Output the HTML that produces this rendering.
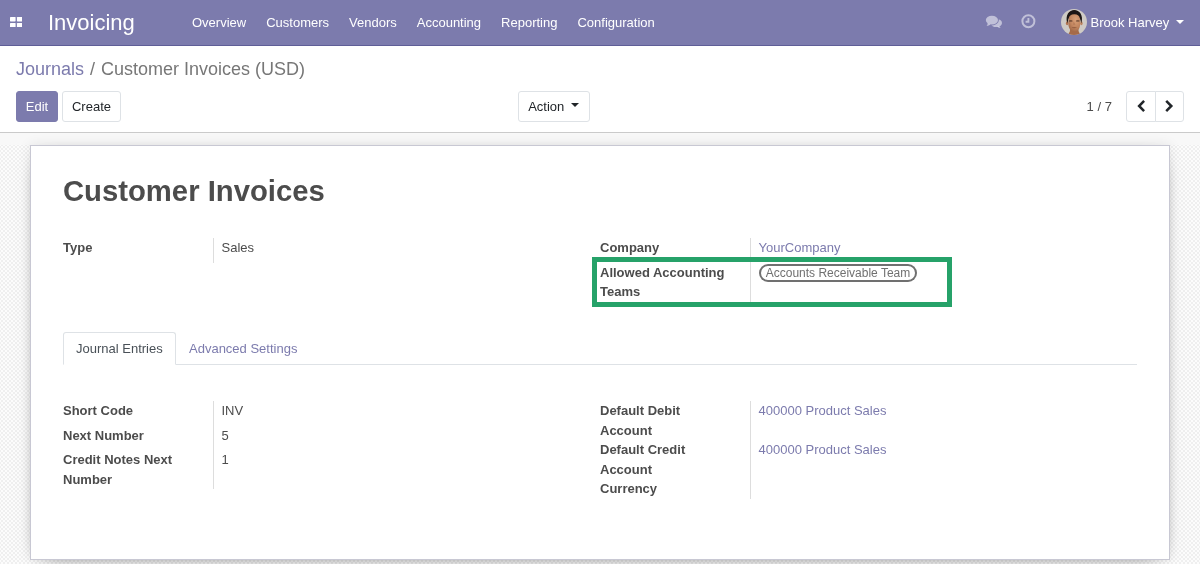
<!DOCTYPE html>
<html lang="en">
<head>
<meta charset="utf-8">
<title>Customer Invoices (USD) - Odoo</title>
<style>
*{box-sizing:border-box;}
html,body{margin:0;padding:0;}
body{width:1200px;height:564px;overflow:hidden;font-family:"Liberation Sans",sans-serif;font-size:13px;line-height:1.5;color:#4c4c4c;background:#f9f9f9;position:relative;}
a{color:#7c7bad;text-decoration:none;}

/* NAVBAR */
.navbar{position:absolute;left:0;top:0;width:1200px;height:46px;background:#7c7bad;border-bottom:1px solid #5f5e97;color:#fff;}
.navbar .apps{position:absolute;left:9.750px;top:16.650px;width:12.500px;height:10.400px;}
.navbar .brand{position:absolute;left:48px;top:0;height:46px;line-height:46px;font-size:22px;color:#fff;}
.navbar .menu{position:absolute;left:182px;top:0;height:46px;display:flex;}
.navbar .menu a{display:block;color:#fff;padding:0 10px;line-height:46px;font-size:13px;}
.navbar .user{position:absolute;left:1090.5px;top:0;line-height:46px;font-size:13px;color:#fff;}
.navbar .caret{position:absolute;left:1176px;top:20px;width:0;height:0;border-left:4px solid transparent;border-right:4px solid transparent;border-top:4px solid #fff;}

/* CONTROL PANEL */
.cp{position:absolute;left:0;top:46px;width:1200px;height:87px;background:#fff;border-bottom:1px solid #cacaca;}
.breadcrumb{position:absolute;left:16px;top:10px;font-size:18px;line-height:27px;color:#777;white-space:nowrap;}
.breadcrumb .sep{color:#777;padding:0 6px;}
.btn{position:absolute;top:45px;height:31px;border:1px solid #dee2e6;border-radius:3px;background:#fff;color:#212529;font-size:13px;line-height:29px;text-align:center;padding:0;}
.btn-primary{background:#7c7bad;border-color:#7c7bad;color:#fff;}
.pager{position:absolute;left:1086.600px;top:45px;line-height:31px;font-size:13px;color:#4c4c4c;}

/* CONTENT */
.content{position:absolute;left:0;top:133px;width:1200px;height:431px;background:conic-gradient(#efefef 25%,#fcfcfc 0 50%,#efefef 0 75%,#fcfcfc 0) 3px 3px/4px 4px;overflow:hidden;}
.content .topshadow{position:absolute;left:0;top:0;width:1200px;height:12px;background:#f8f8f8;}
.sheet{position:absolute;left:30px;top:12px;width:1140px;height:415px;background:#fff;border:1px solid #c8c8d3;box-shadow:0 0 12px rgba(0,0,0,.09),0 5px 20px -15px #000;}
h1{position:absolute;left:32px;top:28px;margin:0;font-size:29.25px;font-weight:bold;line-height:1.2;color:#4c4c4c;white-space:nowrap;}
.navbar,.cp,.content,.sheet{will-change:transform;}
.lbl{position:absolute;font-weight:bold;color:#4c4c4c;line-height:19.5px;white-space:nowrap;}
.val{position:absolute;color:#4c4c4c;line-height:19.5px;white-space:nowrap;}
.vline{position:absolute;width:1px;background:#ddd;}

.sysicon{position:absolute;}
.btn .caret2{position:absolute;left:52px;top:11px;width:0;height:0;border-left:4px solid transparent;border-right:4px solid transparent;border-top:4px solid #212529;}
.btn svg{position:absolute;left:0;top:0;}
.hl{position:absolute;left:561px;top:111px;width:360px;height:50px;border:5px solid #26a269;}
.tag{position:absolute;left:728px;top:118px;width:158px;height:18px;border-radius:9px;box-shadow:inset 0 0 0 2px #707070;color:#707070;font-size:12px;line-height:18px;text-align:center;white-space:nowrap;}
.tabs{position:absolute;left:32px;top:186px;width:1074px;height:33px;border-bottom:1px solid #dee2e6;}
.tab{position:absolute;top:0;height:33px;line-height:19.5px;padding:7px 13px 0 13px;white-space:nowrap;color:#7c7bad;}
.tab.active{left:0;width:113px;border:1px solid #dee2e6;border-bottom:1px solid #fff;border-radius:3px 3px 0 0;color:#495057;padding:6px 12px 0 12px;background:#fff;}
</style>
</head>
<body>

<div class="navbar">
  <svg class="apps" viewBox="0 0 12.5 10.4"><rect x="0" y="0" width="5.6" height="4.45" rx=".6" fill="#fff"/><rect x="6.9" y="0" width="5.6" height="4.45" rx=".6" fill="#fff"/><rect x="0" y="5.95" width="5.6" height="4.45" rx=".6" fill="#fff"/><rect x="6.9" y="5.95" width="5.6" height="4.45" rx=".6" fill="#fff"/></svg>
  <div class="brand">Invoicing</div>
  <div class="menu">
    <a>Overview</a><a>Customers</a><a>Vendors</a><a>Accounting</a><a>Reporting</a><a>Configuration</a>
  </div>
  <svg class="sysicon" style="left:985px;top:15px;" width="18" height="14" viewBox="0 0 18 14"><defs><mask id="cm"><rect width="18" height="14" fill="#fff"/><ellipse cx="6.9" cy="5.1" rx="7" ry="5.3" fill="#000"/><path d="M2.2 8.200L1 12l5-2.300z" fill="#000"/></mask></defs><g fill="#fff" fill-opacity=".52"><ellipse cx="6.9" cy="5.1" rx="6.1" ry="4.4"/><path d="M2.700 8.100C2.600 9.300 2.300 10.300 1.600 11.100 3.200 10.900 4.500 10.300 5.500 9.400z"/><g mask="url(#cm)"><ellipse cx="11.300" cy="8" rx="5.700" ry="4.100"/><path d="M14.300 11.300C14.600 12 15.100 12.600 15.800 13.100 14.400 13 13.200 12.500 12.200 11.800z"/></g></g></svg>
  <svg class="sysicon" style="left:1020px;top:13px;" width="17" height="17" viewBox="0 0 17 17"><g fill="none" stroke="#fff" stroke-opacity=".52"><circle cx="8.400" cy="8.250" r="6" stroke-width="2"/><path d="M8.400 5v3.700H5.600" stroke-width="1.900"/></g></svg>
  <svg class="sysicon" style="left:1061px;top:9px;" width="26" height="26" viewBox="0 0 26 26"><defs><clipPath id="avc"><circle cx="13" cy="13" r="13"/></clipPath><radialGradient id="avg" cx=".62" cy=".3" r=".8"><stop offset="0" stop-color="#d9a178"/><stop offset=".55" stop-color="#c28660"/><stop offset="1" stop-color="#9c6444"/></radialGradient><filter id="avb" x="-20%" y="-20%" width="140%" height="140%"><feGaussianBlur stdDeviation=".45"/></filter></defs><g clip-path="url(#avc)"><rect width="26" height="26" fill="#cfcbc5"/><g filter="url(#avb)"><path d="M6.500 27L8.800 22.500 9.500 18h7.500l.7 4.500L20 27z" fill="#a56b49"/><ellipse cx="6.100" cy="14.300" rx="1.200" ry="2" fill="#b07552"/><ellipse cx="20.400" cy="14.300" rx="1.200" ry="2" fill="#bd8560"/><path d="M6.300 14.200C3.800 6 8.300 1 13.300 1s9.500 5 7 13.200l-1.300-4.700H7.600z" fill="#1b1412"/><path d="M7.700 9.800C8 6.800 9.800 5.200 13.300 5.200s5.300 1.600 5.600 4.600c.5 3 .6 6.200-.3 8.600-.9 2.500-2.900 4.100-5.300 4.100s-4.400-1.600-5.300-4.100c-.9-2.400-.8-5.600-.3-8.600z" fill="url(#avg)"/><ellipse cx="9.700" cy="11.900" rx="1.900" ry=".85" fill="#5e3d2d" fill-opacity=".75"/><ellipse cx="16.800" cy="11.900" rx="1.900" ry=".85" fill="#5e3d2d" fill-opacity=".7"/><path d="M12.600 12.500l-.5 3.300h2.300z" fill="#a86e4c" fill-opacity=".6"/><ellipse cx="13.200" cy="18.600" rx="2.600" ry=".55" fill="#8a553b" fill-opacity=".75"/></g></g></svg>
  <div class="user">Brook Harvey</div>
  <div class="caret"></div>
</div>

<div class="cp">
  <div class="breadcrumb"><a>Journals</a><span class="sep">/</span>Customer Invoices (USD)</div>
  <div class="btn btn-primary" style="left:16px;width:42px;">Edit</div>
  <div class="btn" style="left:62px;width:59px;">Create</div>
  <div class="btn" style="left:518px;width:72px;text-align:left;padding-left:9.2px;">Action<span class="caret2"></span></div>
  <div class="pager">1 / 7</div>
  <div class="btn" style="left:1126px;width:30.3px;border-radius:3px 0 0 3px;"><svg width="29" height="29" viewBox="0 0 29 29"><polyline points="17.1,8.9 12.100,14 17.1,19.1" fill="none" stroke="#212529" stroke-width="2.5"/></svg></div>
  <div class="btn" style="left:1155.3px;width:28.4px;border-radius:0 3px 3px 0;"><svg width="27" height="29" viewBox="0 0 27 29"><polyline points="10.200,8.9 15.300,14 10.200,19.1" fill="none" stroke="#212529" stroke-width="2.5"/></svg></div>
</div>

<div class="content">
  <div class="topshadow"></div>
  <div class="sheet">
    <h1>Customer Invoices</h1>

    <div class="lbl" style="left:32px;top:92px;">Type</div>
    <div class="vline" style="left:182px;top:92px;height:24.5px;"></div>
    <div class="val" style="left:190.500px;top:92px;">Sales</div>

    <div class="lbl" style="left:569px;top:92px;">Company</div>
    <div class="vline" style="left:719px;top:92px;height:63.5px;"></div>
    <a class="val" style="left:727.500px;top:92px;color:#7c7bad;">YourCompany</a>
    <div class="lbl" style="left:569px;top:116.5px;">Allowed Accounting<br>Teams</div>
    <div class="tag">Accounts Receivable Team</div>
    <div class="hl"></div>

    <div class="tabs">
      <div class="tab active">Journal Entries</div>
      <div class="tab" style="left:113px;">Advanced Settings</div>
    </div>

    <div class="lbl" style="left:32px;top:255px;">Short Code</div>
    <div class="lbl" style="left:32px;top:279.5px;">Next Number</div>
    <div class="lbl" style="left:32px;top:304px;">Credit Notes Next<br>Number</div>
    <div class="vline" style="left:182px;top:255px;height:88px;"></div>
    <div class="val" style="left:190.500px;top:255px;">INV</div>
    <div class="val" style="left:190.500px;top:279.5px;">5</div>
    <div class="val" style="left:190.500px;top:304px;">1</div>

    <div class="lbl" style="left:569px;top:255px;">Default Debit<br>Account</div>
    <div class="lbl" style="left:569px;top:294px;">Default Credit<br>Account</div>
    <div class="lbl" style="left:569px;top:333px;">Currency</div>
    <div class="vline" style="left:719px;top:255px;height:97.5px;"></div>
    <a class="val" style="left:727.500px;top:255px;color:#7c7bad;">400000 Product Sales</a>
    <a class="val" style="left:727.500px;top:294px;color:#7c7bad;">400000 Product Sales</a>
  </div>
</div>

</body>
</html>
